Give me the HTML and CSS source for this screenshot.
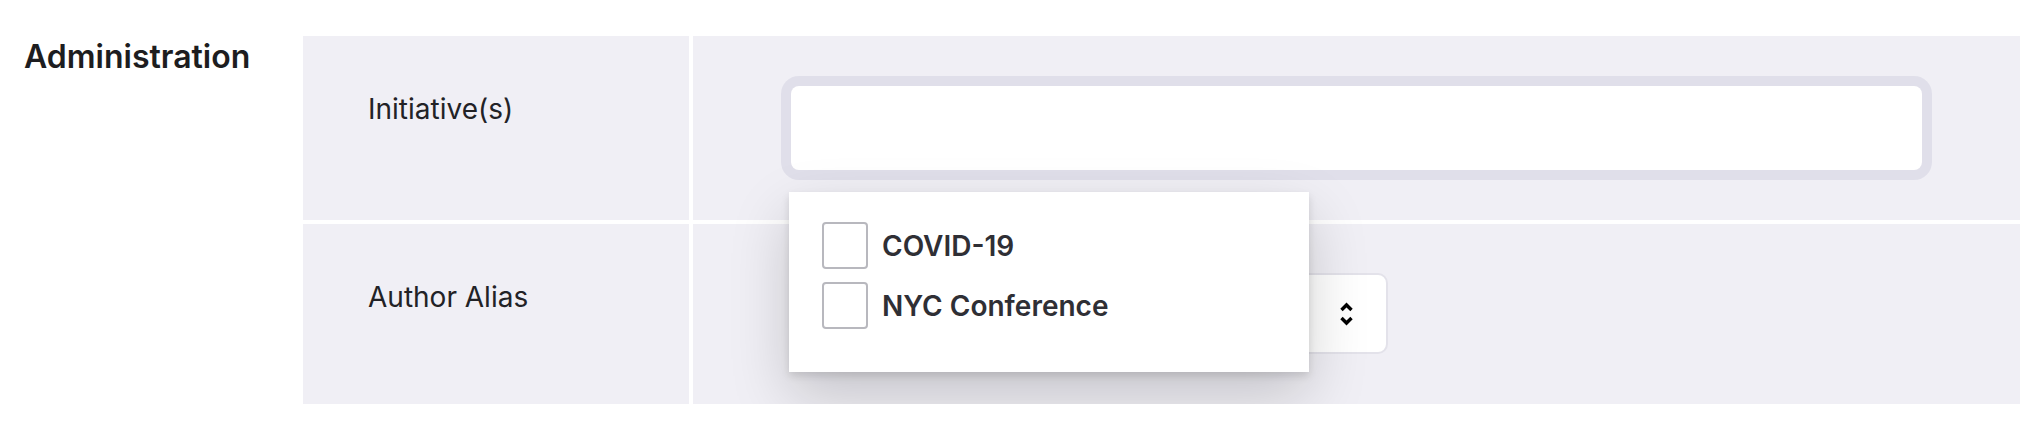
FILE: index.html
```html
<!DOCTYPE html>
<html lang="en">
<head>
    <meta charset="UTF-8">
    <meta name="viewport" content="width=device-width, initial-scale=1.0">
    <title>Administration</title>
    <link rel="stylesheet" href="styles.css">
</head>
<body>

<div class="section">
    <h2 class="section-title">Administration</h2>
    <div class="fields">
        <div class="field-label">Initiative(s)</div>
        <div class="field-value">
            <div class="multi-select">
                <div class="tag-input"></div>
                <ul class="options">
                    <li class="option"><span class="check"></span>COVID-19</li>
                    <li class="option"><span class="check"></span>NYC Conference</li>
                </ul>
            </div>
        </div>

        <div class="field-label">Author Alias</div>
        <div class="field-value field-value-select">
            <div class="select">
                <svg class="select-arrows" width="15" height="26" viewBox="0 0 15 26">
                    <polyline points="2.5,9 7.5,4 12.5,9" fill="none" stroke="#000" stroke-width="3.4"/>
                    <polyline points="2.5,17 7.5,22 12.5,17" fill="none" stroke="#000" stroke-width="3.4"/>
                </svg>
            </div>
        </div>
    </div>
</div>

</body>
</html>
```

FILE: styles.css
```css
body {
    margin: 0;
    font-family: Inter, "Noto Sans", Arial, sans-serif;
    background: #fff;
    color: #1f1f23;
}
.section {
    display: flex;
    padding: 36px 22px 0 24px;
}
.section-title {
    width: 279px;
    flex-shrink: 0;
    margin: 0;
    font-size: 32px;
    line-height: 42px;
    font-weight: 600;
    color: #1d1d20;
}
.fields {
    flex: 1;
    display: grid;
    grid-template-columns: 386px 1fr;
    gap: 4px;
}
.field-label {
    background: #f0eff5;
    padding: 53px 20px 0 65px;
    font-size: 28px;
    line-height: 40px;
    color: #222226;
}
.field-value {
    background: #f0eff5;
    padding: 50px 98px;
}
.field-value-select {
    padding-top: 49px;
}
.multi-select {
    position: relative;
}
.tag-input {
    height: 84px;
    background: #fff;
    border-radius: 8px;
    box-shadow: 0 0 0 10px #e0dfea;
}
.options {
    position: absolute;
    top: calc(100% + 22px);
    left: -2px;
    z-index: 2;
    width: 520px;
    height: 180px;
    box-sizing: border-box;
    margin: 0;
    padding: 30px 0 0 33px;
    list-style: none;
    background: #fff;
    box-shadow: 0 4px 8px rgba(0,0,0,0.12), 0 24px 60px rgba(0,0,0,0.18);
}
.option {
    display: flex;
    align-items: center;
    gap: 14px;
    height: 47px;
    margin-bottom: 13px;
    font-size: 28px;
    font-weight: 600;
    color: #2f2f35;
}
.check {
    width: 46px;
    height: 47px;
    box-sizing: border-box;
    border: 2px solid #b8b8be;
    border-radius: 4px;
    background: #fff;
}
.select {
    width: 597px;
    height: 81px;
    box-sizing: border-box;
    display: flex;
    align-items: center;
    justify-content: flex-end;
    padding-right: 32px;
    background: #fff;
    border: 2px solid #e3e2ea;
    border-radius: 10px;
}
```
